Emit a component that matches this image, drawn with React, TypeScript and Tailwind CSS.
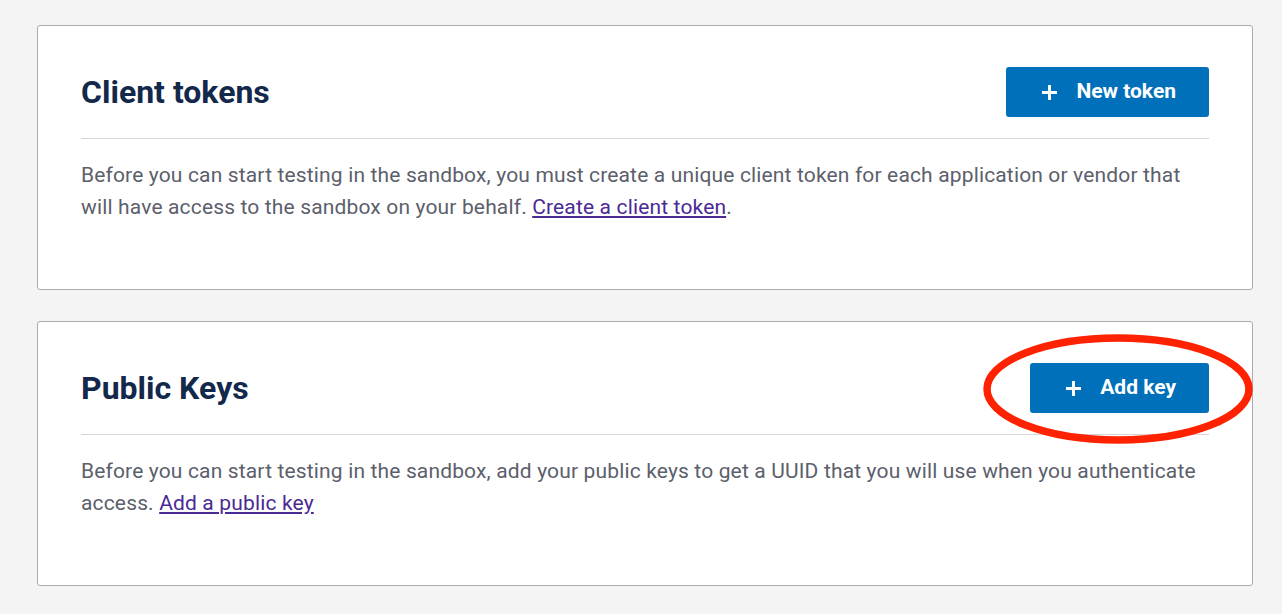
import React from "react";

function Plus() {
  return (
    <svg width="17" height="17" viewBox="0 0 17 17" className="shrink-0">
      <path d="M8.5 1v15M1 8.5h15" stroke="white" strokeWidth="3" strokeLinecap="butt" />
    </svg>
  );
}

function Card({
  title,
  button,
  children,
  overlay,
}: {
  title: string;
  button: string;
  children: React.ReactNode;
  overlay?: React.ReactNode;
}) {
  return (
    <div className="relative w-[1216px] bg-white border border-[#ababaf] rounded-[3px] px-[43px] pt-[41px] pb-[66px]">
      <div className="flex items-center justify-between h-[50px]">
        <h2 className="text-[32px] font-bold text-[#13294b] leading-none">{title}</h2>
        <button className="relative z-0 flex items-center h-[50px] pl-[35px] pr-[33px] gap-[18px] bg-[#0070ba] rounded-[3px] text-white text-[21px] font-bold">
          <Plus />
          <span>{button}</span>
        </button>
      </div>
      <div className="mt-[21px] h-px bg-[#d6d6d8]" />
      <p className="mt-5 text-[21px] leading-[32px] tracking-[0.15px] text-[#5b606b]">{children}</p>
      {overlay}
    </div>
  );
}

export default function App() {
  return (
    <div
      className="min-h-[614px] bg-[#f4f4f4] pt-[25px] pl-[37px] flex flex-col gap-[31px]"
      style={{ fontFamily: "Roboto, 'Liberation Sans', sans-serif" }}
    >
      <Card title="Client tokens" button="New token">
        Before you can start testing in the sandbox, you must create a unique client token for each application or vendor that will have access to the sandbox on your behalf.{" "}
        <a href="#" className="text-[#4a2a94] underline underline-offset-[2px]">Create a client token</a>.
      </Card>
      <Card
        title="Public Keys"
        button="Add key"
        overlay={
          <svg
            className="absolute left-[944px] top-[11px] pointer-events-none"
            width="272"
            height="112"
            viewBox="0 0 272 112"
          >
            <ellipse cx="136" cy="56" rx="131" ry="51" fill="none" stroke="#ff2200" strokeWidth="7.5" />
          </svg>
        }
      >
        Before you can start testing in the sandbox, add your public keys to get a UUID that you will use when you authenticate access.{" "}
        <a href="#" className="text-[#4a2a94] underline underline-offset-[2px]">Add a public key</a>
      </Card>
    </div>
  );
}
